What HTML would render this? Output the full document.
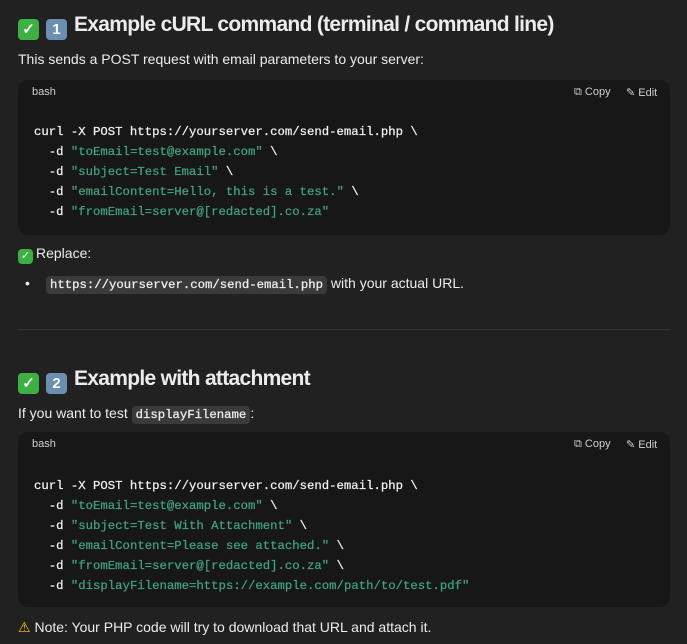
<!DOCTYPE html><html><head><style>
body{margin:0;background:#212121;width:687px;height:644px;overflow:hidden;font-family:"Liberation Sans",sans-serif;color:#ececec;position:relative}
.a{position:absolute;white-space:nowrap}
h2{margin:0;font-size:21px;font-weight:bold;letter-spacing:-0.7px}
.p{font-size:14px}
.cb{position:absolute;left:18px;width:652px;background:#171717;border-radius:10px}
.lang{position:absolute;left:14px;top:6px;font-size:11px;color:#cfcfcf}
.btn{position:absolute;top:6px;font-size:11px;color:#cfcfcf}
pre{position:absolute;left:16px;margin:0;font-family:"Liberation Mono",monospace;font-size:12.3px;line-height:20px;color:#f0f0f0;-webkit-text-stroke:0.25px currentColor}
.s{color:#3fa37c}
.ic{background:#3a3a3a;border-radius:4px;padding:2px 4px;font-family:"Liberation Mono",monospace;font-size:12.3px;-webkit-text-stroke:0.3px currentColor}
.em{display:inline-block;width:21px;height:21px;border-radius:4px;vertical-align:-3px;text-align:center;line-height:21px;font-size:15px;color:#fff;margin-right:7px;letter-spacing:0}
.g{background:#3cb043}.b{background:#6b8fb3}
.sm{width:15px;height:15px;line-height:15px;font-size:11px;vertical-align:-1px;margin-right:3px}
</style></head><body>
<div class="a" style="left:18px;top:13px"><h2><span class="em g">✓</span><span class="em b">1</span>Example cURL command (terminal / command line)</h2></div>
<div class="a p" style="left:18px;top:51px">This sends a POST request with email parameters to your server:</div>
<div class="cb" style="top:80px;height:155px">
<div class="lang">bash</div><div class="btn" style="left:556px">⧉ Copy</div><div class="btn" style="left:608px">✎ Edit</div>
<pre style="top:42px">curl -X POST https://yourserver.com/send-email.php \
  -d <span class="s">"toEmail=test@example.com"</span> \
  -d <span class="s">"subject=Test Email"</span> \
  -d <span class="s">"emailContent=Hello, this is a test."</span> \
  -d <span class="s">"fromEmail=server@[redacted].co.za"</span></pre></div>
<div class="a p" style="left:18px;top:245px"><span class="em g sm">✓</span>Replace:</div>
<div class="a p" style="left:25px;top:275px">•</div>
<div class="a p" style="left:46px;top:275px"><span class="ic">https://yourserver.com/send-email.php</span> with your actual URL.</div>
<div class="a" style="left:18px;top:329px;width:652px;height:1px;background:#333"></div>
<div class="a" style="left:18px;top:367px"><h2><span class="em g">✓</span><span class="em b">2</span>Example with attachment</h2></div>
<div class="a p" style="left:18px;top:405px">If you want to test <span class="ic">displayFilename</span>:</div>
<div class="cb" style="top:432px;height:175px">
<div class="lang">bash</div><div class="btn" style="left:556px">⧉ Copy</div><div class="btn" style="left:608px">✎ Edit</div>
<pre style="top:44px">curl -X POST https://yourserver.com/send-email.php \
  -d <span class="s">"toEmail=test@example.com"</span> \
  -d <span class="s">"subject=Test With Attachment"</span> \
  -d <span class="s">"emailContent=Please see attached."</span> \
  -d <span class="s">"fromEmail=server@[redacted].co.za"</span> \
  -d <span class="s">"displayFilename=https://example.com/path/to/test.pdf"</span></pre></div>
<div class="a p" style="left:18px;top:619px"><span style="color:#f5c518">⚠</span> Note: Your PHP code will try to download that URL and attach it.</div>
</body></html>
